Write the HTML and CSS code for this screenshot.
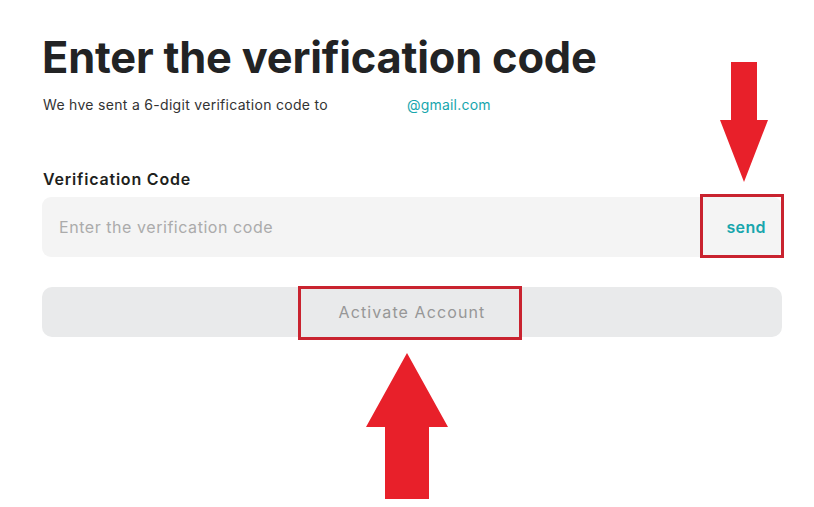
FILE: index.html
```html
<!DOCTYPE html>
<html>
<head>
<meta charset="utf-8">
<link rel="stylesheet" href="styles.css">
</head>
<body>
<main class="page">
  <h1 class="title">Enter the verification code</h1>
  <p class="subtitle"><span class="sent">We hve sent a 6-digit verification code to</span><span class="email">@gmail.com</span></p>
  <label class="label" for="code">Verification Code</label>
  <div class="field">
    <input id="code" class="input" type="text" placeholder="Enter the verification code">
    <button class="send" type="button">send</button>
  </div>
  <button class="activate" type="button">Activate Account</button>
</main>
<div class="mark mark-send"></div>
<div class="mark mark-activate"></div>
<svg class="arrow arrow-down" width="50" height="124" viewBox="0 0 50 124">
  <polygon points="11,0 37,0 37,58 48,58 24,120 0,58 11,58" fill="#e8202a"/>
</svg>
<svg class="arrow arrow-up" width="84" height="148" viewBox="0 0 84 148">
  <polygon points="41,0 82,74 63,74 63,146 19,146 19,74 0,74" fill="#e8202a"/>
</svg>
</body>
</html>
```
FILE: styles.css
```css
html, body {
  margin: 0;
  padding: 0;
  background: #ffffff;
}
body {
  width: 814px;
  height: 507px;
  position: relative;
  overflow: hidden;
  font-family: Inter, "Noto Sans", sans-serif;
}
.page {
  padding: 28px 32px 0 42px;
  display: flex;
  flex-direction: column;
}
.title {
  margin: 0;
  font-size: 43.4px;
  line-height: 58px;
  font-weight: 700;
  color: #222324;
  letter-spacing: -0.2px;
}
.subtitle {
  margin: 10px 0 0 1px;
  font-size: 14px;
  line-height: 18px;
  color: #333;
  display: flex;
  letter-spacing: 0.3px;
}
.sent {
  width: 364px;
}
.email {
  color: #17a6ad;
  letter-spacing: 0.2px;
}
.label {
  margin-top: 55px;
  font-size: 16px;
  font-weight: 600;
  color: #1e1f20;
  line-height: 20px;
  padding-left: 1px;
  letter-spacing: 0.8px;
}
.field {
  margin-top: 8px;
  height: 60px;
  background: #f4f4f4;
  border-radius: 9px;
  display: flex;
  align-items: center;
  width: 740px;
}
.input {
  flex: 1;
  border: 0;
  background: transparent;
  font-family: inherit;
  font-size: 16px;
  letter-spacing: 0.55px;
  color: #222;
  padding: 0 0 0 17px;
  height: 100%;
  outline: none;
}
.input::placeholder {
  color: #ababab;
}
.send {
  border: 0;
  background: transparent;
  font-family: inherit;
  font-size: 16px;
  letter-spacing: 0.4px;
  font-weight: 600;
  color: #17a6ad;
  padding: 0 16px 0 0;
  width: 70px;
  text-align: right;
}
.activate {
  margin-top: 30px;
  width: 740px;
  height: 50px;
  border: 0;
  border-radius: 10px;
  background: #e9eaeb;
  color: #979797;
  font-family: inherit;
  font-size: 16px;
  font-weight: 400;
  letter-spacing: 1.1px;
  padding: 0;
}
.mark {
  position: absolute;
  border: 3px solid #c9232f;
  box-sizing: border-box;
}
.mark-send {
  left: 700px;
  top: 194px;
  width: 84px;
  height: 64px;
}
.mark-activate {
  left: 298px;
  top: 286px;
  width: 224px;
  height: 54px;
}
.arrow {
  position: absolute;
}
.arrow-down {
  left: 720px;
  top: 62px;
}
.arrow-up {
  left: 366px;
  top: 353px;
}
```
